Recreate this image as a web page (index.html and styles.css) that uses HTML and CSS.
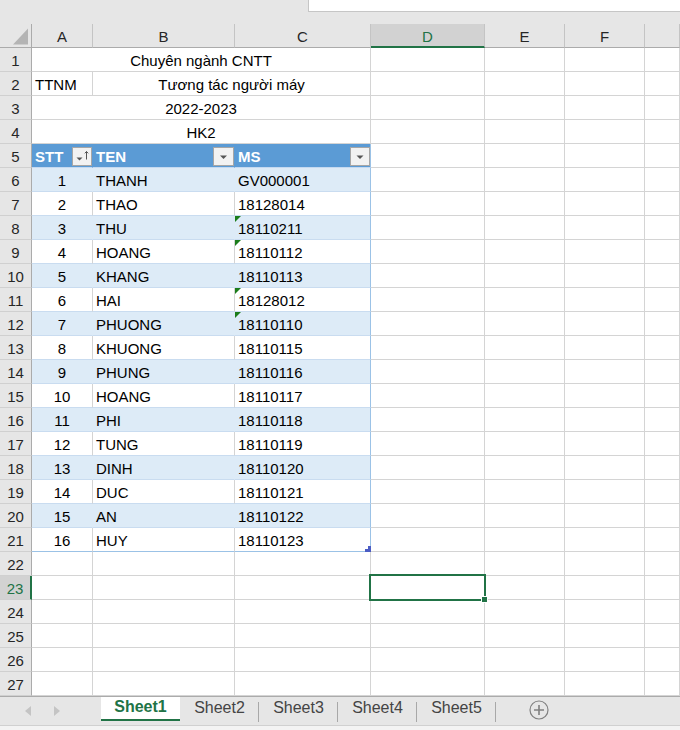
FILE: index.html
```html
<!DOCTYPE html>
<html>
<head>
<meta charset="utf-8">
<link rel="stylesheet" href="styles.css">
</head>
<body>
<div class="app">
  <div class="topbar"><div class="topspace"></div><div class="fbox"></div></div>
  <div class="sheet">
    <div class="corner"><svg width="16" height="17" viewBox="0 0 16 17"><polygon points="16,0 16,17 0,17" fill="#b4b4b4"/></svg></div>
    <div class="ch">A</div><div class="ch">B</div><div class="ch">C</div><div class="ch sel">D</div><div class="ch">E</div><div class="ch">F</div><div class="ch"></div>

    <div class="rh">1</div><div class="c m3 ctr">Chuyên ngành CNTT</div><div class="c"></div><div class="c"></div><div class="c"></div><div class="c"></div>
    <div class="rh">2</div><div class="c">TTNM</div><div class="c m2 ctr">Tương tác người máy</div><div class="c"></div><div class="c"></div><div class="c"></div><div class="c"></div>
    <div class="rh">3</div><div class="c m3 ctr">2022-2023</div><div class="c"></div><div class="c"></div><div class="c"></div><div class="c"></div>
    <div class="rh">4</div><div class="c m3 ctr">HK2</div><div class="c"></div><div class="c"></div><div class="c"></div><div class="c"></div>

    <div class="rh">5</div>
    <div class="c th"><span>STT</span><span class="fbtn"><svg width="18" height="17" viewBox="0 0 18 17"><polygon points="3.5,9.5 9.5,9.5 6.5,12.5" fill="#555"/><path d="M13.5 3.5 V11.5 M11.8 5.3 L13.5 3.5 L15.2 5.3" stroke="#555" stroke-width="1" fill="none"/></svg></span></div>
    <div class="c th"><span>TEN</span><span class="fbtn w"><svg width="19" height="17" viewBox="0 0 19 17"><polygon points="6,7.5 13,7.5 9.5,11" fill="#555"/></svg></span></div>
    <div class="c th last"><span>MS</span><span class="fbtn"><svg width="18" height="17" viewBox="0 0 18 17"><polygon points="5.5,7.5 12.5,7.5 9,11" fill="#555"/></svg></span></div>
    <div class="c"></div><div class="c"></div><div class="c"></div><div class="c"></div>

    <div class="rh">6</div><div class="c b ctr">1</div><div class="c b">THANH</div><div class="c b last">GV000001</div><div class="c"></div><div class="c"></div><div class="c"></div><div class="c"></div>
    <div class="rh">7</div><div class="c w2 ctr">2</div><div class="c w2">THAO</div><div class="c w2 last">18128014</div><div class="c"></div><div class="c"></div><div class="c"></div><div class="c"></div>
    <div class="rh">8</div><div class="c b ctr">3</div><div class="c b">THU</div><div class="c b last err">18110211</div><div class="c"></div><div class="c"></div><div class="c"></div><div class="c"></div>
    <div class="rh">9</div><div class="c w2 ctr">4</div><div class="c w2">HOANG</div><div class="c w2 last err">18110112</div><div class="c"></div><div class="c"></div><div class="c"></div><div class="c"></div>
    <div class="rh">10</div><div class="c b ctr">5</div><div class="c b">KHANG</div><div class="c b last">18110113</div><div class="c"></div><div class="c"></div><div class="c"></div><div class="c"></div>
    <div class="rh">11</div><div class="c w2 ctr">6</div><div class="c w2">HAI</div><div class="c w2 last err">18128012</div><div class="c"></div><div class="c"></div><div class="c"></div><div class="c"></div>
    <div class="rh">12</div><div class="c b ctr">7</div><div class="c b">PHUONG</div><div class="c b last err">18110110</div><div class="c"></div><div class="c"></div><div class="c"></div><div class="c"></div>
    <div class="rh">13</div><div class="c w2 ctr">8</div><div class="c w2">KHUONG</div><div class="c w2 last">18110115</div><div class="c"></div><div class="c"></div><div class="c"></div><div class="c"></div>
    <div class="rh">14</div><div class="c b ctr">9</div><div class="c b">PHUNG</div><div class="c b last">18110116</div><div class="c"></div><div class="c"></div><div class="c"></div><div class="c"></div>
    <div class="rh">15</div><div class="c w2 ctr">10</div><div class="c w2">HOANG</div><div class="c w2 last">18110117</div><div class="c"></div><div class="c"></div><div class="c"></div><div class="c"></div>
    <div class="rh">16</div><div class="c b ctr">11</div><div class="c b">PHI</div><div class="c b last">18110118</div><div class="c"></div><div class="c"></div><div class="c"></div><div class="c"></div>
    <div class="rh">17</div><div class="c w2 ctr">12</div><div class="c w2">TUNG</div><div class="c w2 last">18110119</div><div class="c"></div><div class="c"></div><div class="c"></div><div class="c"></div>
    <div class="rh">18</div><div class="c b ctr">13</div><div class="c b">DINH</div><div class="c b last">18110120</div><div class="c"></div><div class="c"></div><div class="c"></div><div class="c"></div>
    <div class="rh">19</div><div class="c w2 ctr">14</div><div class="c w2">DUC</div><div class="c w2 last">18110121</div><div class="c"></div><div class="c"></div><div class="c"></div><div class="c"></div>
    <div class="rh">20</div><div class="c b ctr">15</div><div class="c b">AN</div><div class="c b last">18110122</div><div class="c"></div><div class="c"></div><div class="c"></div><div class="c"></div>
    <div class="rh">21</div><div class="c w2 bot ctr">16</div><div class="c w2 bot">HUY</div><div class="c w2 bot last grip">18110123</div><div class="c"></div><div class="c"></div><div class="c"></div><div class="c"></div>

    <div class="rh">22</div><div class="c"></div><div class="c"></div><div class="c"></div><div class="c"></div><div class="c"></div><div class="c"></div><div class="c"></div>
    <div class="rh rsel">23</div><div class="c"></div><div class="c"></div><div class="c"></div><div class="c active"></div><div class="c"></div><div class="c"></div><div class="c"></div>
    <div class="rh">24</div><div class="c"></div><div class="c"></div><div class="c"></div><div class="c"></div><div class="c"></div><div class="c"></div><div class="c"></div>
    <div class="rh">25</div><div class="c"></div><div class="c"></div><div class="c"></div><div class="c"></div><div class="c"></div><div class="c"></div><div class="c"></div>
    <div class="rh">26</div><div class="c"></div><div class="c"></div><div class="c"></div><div class="c"></div><div class="c"></div><div class="c"></div><div class="c"></div>
    <div class="rh">27</div><div class="c"></div><div class="c"></div><div class="c"></div><div class="c"></div><div class="c"></div><div class="c"></div><div class="c"></div>
  </div>
  <div class="tabs">
    <div class="nav">
      <svg width="8" height="10" viewBox="0 0 8 10"><polygon points="7,0 7,10 1,5" fill="#c4c4c4"/></svg>
      <svg width="8" height="10" viewBox="0 0 8 10"><polygon points="1,0 1,10 7,5" fill="#c4c4c4"/></svg>
    </div>
    <div class="tab on">Sheet1</div>
    <div class="tab">Sheet2</div>
    <div class="tab">Sheet3</div>
    <div class="tab">Sheet4</div>
    <div class="tab">Sheet5</div>
    <div class="add"><svg width="20" height="20" viewBox="0 0 20 20"><circle cx="10" cy="10" r="9" fill="none" stroke="#808080" stroke-width="1.2"/><path d="M10 5 V15 M5 10 H15" stroke="#808080" stroke-width="1.6"/></svg></div>
  </div>
  <div class="status"></div>
</div>
</body>
</html>
```

FILE: styles.css
```css
html, body {
  margin: 0;
  padding: 0;
}
body {
  width: 680px;
  height: 730px;
  overflow: hidden;
  background: #e6e6e6;
  font-family: "Liberation Sans", Arial, sans-serif;
  font-size: 15px;
  color: #000;
}
.app {
  display: flex;
  flex-direction: column;
  width: 680px;
  height: 730px;
}
.topbar {
  display: flex;
  height: 24px;
  flex: none;
  background: #e6e6e6;
}
.topspace {
  width: 308px;
}
.fbox {
  flex: 1;
  height: 11px;
  background: #fff;
  border-left: 1px solid #c6c6c6;
  border-bottom: 1px solid #c6c6c6;
}
.sheet {
  display: grid;
  grid-template-columns: 32px 61px 142px 136px 114px 80px 80px 35px;
  grid-auto-rows: 24px;
  width: 680px;
  background: #fff;
  flex: none;
}
.sheet > div {
  box-sizing: border-box;
  border-right: 1px solid #d4d4d4;
  border-bottom: 1px solid #d4d4d4;
  display: flex;
  align-items: center;
  white-space: nowrap;
  overflow: visible;
  padding: 1px 3px 0 3px;
}
.sheet > .corner {
  background: #e6e6e6;
  border-right: 1px solid #ababab;
  border-bottom: 1px solid #ababab;
  padding: 4px 3px 3px 13px;
  align-items: flex-start;
}
.sheet > .ch {
  background: #e6e6e6;
  justify-content: center;
  color: #262626;
  border-right: 1px solid #c4c4c4;
  border-bottom: 1px solid #ababab;
  font-size: 15px;
  padding-top: 2px;
}
.sheet > .ch.sel {
  background: #d2d2d2;
  color: #217346;
  border-bottom: 2px solid #217346;
}
.sheet > .rh {
  background: #e6e6e6;
  justify-content: center;
  color: #262626;
  border-right: 1px solid #ababab;
  border-bottom: 1px solid #d0d0d0;
  padding: 1px 0 0 0;
}
.sheet > .rh.rsel {
  background: #d2d2d2;
  color: #217346;
  border-right: 2px solid #217346;
}
.sheet > .m3 {
  grid-column: span 3;
}
.sheet > .m2 {
  grid-column: span 2;
}
.sheet > .ctr {
  justify-content: center;
}
.sheet > .th {
  background: #5b9bd5;
  color: #fff;
  font-weight: bold;
  justify-content: space-between;
  border-right: 1px solid #5b9bd5;
  border-bottom: 1px solid #c5d9f0;
  padding-right: 0;
}
.fbtn {
  display: flex;
  box-sizing: border-box;
  width: 20px;
  height: 19px;
  background: #f2f2f2;
  border: 1px solid #a6a6a6;
  margin-right: 0;
}
.fbtn.w {
  width: 21px;
}
.sheet > .b {
  background: #ddebf7;
  border-right: 1px solid #ddebf7;
  border-bottom: 1px solid #c9dcf0;
}
.sheet > .w2 {
  background: #fff;
  border-bottom: 1px solid #c9dcf0;
}
.sheet > .last {
  border-right: 1px solid #9bc2e6;
}
.sheet > .bot {
  border-bottom: 1px solid #9bc2e6;
}
.sheet > .err {
  position: relative;
}
.sheet > .err::before {
  content: "";
  position: absolute;
  left: 0;
  top: 0;
  border-top: 6px solid #1b7d1b;
  border-right: 6px solid transparent;
}
.sheet > .grip {
  position: relative;
}
.sheet > .grip::after {
  content: "";
  position: absolute;
  right: -1px;
  bottom: -1px;
  width: 6px;
  height: 3px;
  background: #4b5cc4;
}
.sheet > .grip::before {
  content: "";
  position: absolute;
  right: -1px;
  bottom: -1px;
  width: 3px;
  height: 6px;
  background: #4b5cc4;
}
.sheet > .active {
  position: relative;
}
.sheet > .active::before {
  content: "";
  position: absolute;
  left: -2px;
  top: -2px;
  right: -2px;
  bottom: -2px;
  border: 2px solid #217346;
  z-index: 2;
}
.sheet > .active::after {
  content: "";
  position: absolute;
  right: -4px;
  bottom: -4px;
  width: 5px;
  height: 5px;
  background: #217346;
  border: 1px solid #fff;
  z-index: 3;
}
.tabs {
  display: flex;
  align-items: stretch;
  height: 28px;
  flex: none;
  background: #e6e6e6;
  border-top: 1px solid #ababab;
  border-bottom: 1px solid #d0d0d0;
}
.nav {
  width: 101px;
  display: flex;
  align-items: center;
  padding-left: 24px;
  gap: 21px;
  box-sizing: border-box;
}
.tab {
  width: 79px;
  box-sizing: border-box;
  display: flex;
  align-items: center;
  justify-content: center;
  font-size: 16px;
  color: #444;
  position: relative;
  padding-bottom: 6px;
}
.tab::after {
  content: "";
  position: absolute;
  right: 0;
  top: 5px;
  height: 20px;
  border-right: 1px solid #a8a8a8;
}
.tab.on {
  background: #fff;
  color: #217346;
  font-weight: bold;
  height: 24px;
  border-bottom: 2px solid #217346;
  padding-bottom: 2px;
}
.tab.on::after {
  display: none;
}
.add {
  display: flex;
  align-items: center;
  padding-left: 33px;
  padding-bottom: 2px;
}
.status {
  flex: 1;
  background: #f3f3f3;
}
```
